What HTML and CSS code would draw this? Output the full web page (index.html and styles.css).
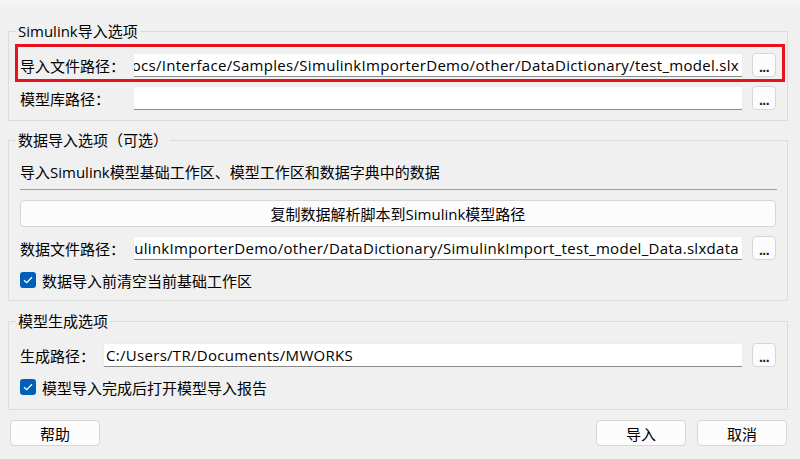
FILE: index.html
```html
<!DOCTYPE html>
<html lang="zh-CN">
<head>
  <meta charset="UTF-8" />
  <meta name="viewport" content="width=device-width, initial-scale=1.0" />
  <title>Simulink导入</title>
  <link rel="stylesheet" href="styles.css">
</head>
<body>
  <div class="top-strip"></div>

  <div class="dialog">
    <fieldset class="group group-first">
      <legend>Simulink导入选项</legend>
      <div class="row row-marked">
        <span class="label">导入文件路径：</span>
        <div class="field"><span>ocs/Interface/Samples/SimulinkImporterDemo/other/DataDictionary/test_model.slx</span></div>
        <button class="browse">...</button>
      </div>
      <div class="row">
        <span class="label">模型库路径：</span>
        <div class="field"></div>
        <button class="browse">...</button>
      </div>
    </fieldset>

    <fieldset class="group">
      <legend>数据导入选项（可选）</legend>
      <div class="desc">导入Simulink模型基础工作区、模型工作区和数据字典中的数据</div>
      <div class="sep"></div>
      <button class="wide-btn">复制数据解析脚本到Simulink模型路径</button>
      <div class="row">
        <span class="label">数据文件路径：</span>
        <div class="field"><span>ulinkImporterDemo/other/DataDictionary/SimulinkImport_test_model_Data.slxdata</span></div>
        <button class="browse">...</button>
      </div>
      <label class="check">
        <span class="box"><svg width="10" height="8" viewBox="0 0 10 8"><path d="M1 4.2 L3.7 6.7 L9 1.2" fill="none" stroke="#fff" stroke-width="1.3"/></svg></span>
        数据导入前清空当前基础工作区
      </label>
    </fieldset>

    <fieldset class="group group-last">
      <legend>模型生成选项</legend>
      <div class="row">
        <span class="label short">生成路径：</span>
        <div class="field left"><span>C:/Users/TR/Documents/MWORKS</span></div>
        <button class="browse">...</button>
      </div>
      <label class="check">
        <span class="box"><svg width="10" height="8" viewBox="0 0 10 8"><path d="M1 4.2 L3.7 6.7 L9 1.2" fill="none" stroke="#fff" stroke-width="1.3"/></svg></span>
        模型导入完成后打开模型导入报告
      </label>
    </fieldset>

    <div class="footer">
      <button class="btn">帮助</button>
      <div class="footer-right">
        <button class="btn">导入</button>
        <button class="btn">取消</button>
      </div>
    </div>
  </div>
</body>
</html>
```

FILE: styles.css
```css
body {
  margin: 0;
  background: #f0f0f0;
  color: #000;
  font-family: "Open Sans", "Noto Sans CJK SC", sans-serif;
  font-size: 15px;
  overflow: hidden;
}

.top-strip {
  height: 7px;
  background: #f4f4f4;
}

.dialog {
  padding: 14px 12px 0 8px;
}

.group {
  margin: 0;
  min-width: 0;
  border: 1px solid #dcdcdc;
  padding: 0 11px 10px 11px;
}

.group + .group {
  margin-top: 9px;
}

.group-last {
  margin-top: 10px !important;
  padding-bottom: 12px;
}

.group legend {
  padding: 0 2px;
  margin-left: -4px;
  line-height: 20px;
  height: 20px;
}

.row {
  display: flex;
  align-items: center;
  height: 24px;
  margin-top: 12px;
}

.row + .row {
  margin-top: 9px;
}

.row-marked {
  position: relative;
}

/* red annotation frame */
.row-marked::after {
  content: "";
  position: absolute;
  top: -9px;
  bottom: -5px;
  left: -5px;
  right: -9px;
  border: 3px solid #e5131d;
  pointer-events: none;
}

.label {
  width: 113px;
  flex: none;
  white-space: nowrap;
}

.label.short {
  width: 83px;
}

.field {
  flex: 1;
  min-width: 0;
  height: 24px;
  box-sizing: border-box;
  background: #fff;
  border: 1px solid #ececec;
  border-bottom-color: #8a8a8a;
  border-radius: 2px;
  display: flex;
  align-items: center;
  justify-content: flex-end;
  overflow: hidden;
  white-space: nowrap;
  padding: 0 3px 0 2px;
  letter-spacing: 0.3px;
}

.field.left {
  justify-content: flex-start;
}

.browse {
  flex: none;
  width: 24px;
  height: 24px;
  margin-left: 9px;
  padding: 4px 0 0;
  background: #fcfcfc;
  border: 1px solid #d6d6d6;
  border-radius: 4px;
  font-family: "Liberation Sans", sans-serif;
  font-size: 14px;
  font-weight: bold;
  line-height: 1;
  letter-spacing: -0.5px;
  color: #222;
}

.desc {
  margin-top: 12px;
  line-height: 20px;
}

.sep {
  margin-top: 7px;
  height: 1px;
  background: #a0a0a0;
  margin-right: -1px;
}

.wide-btn {
  display: block;
  width: 100%;
  height: 27px;
  margin-top: 10px;
  background: #fcfcfc;
  border: 1px solid #d6d6d6;
  border-radius: 4px;
  font-family: inherit;
  font-size: 15px;
  color: #000;
  padding: 0;
}

.wide-btn + .row {
  margin-top: 9px;
}

.check {
  display: flex;
  align-items: center;
  gap: 6px;
  height: 20px;
  margin-top: 10px;
}

.box {
  width: 16px;
  height: 16px;
  border-radius: 3px;
  background: #005fb8;
  display: flex;
  align-items: center;
  justify-content: center;
}

.footer {
  display: flex;
  justify-content: space-between;
  margin-top: 10px;
  padding: 0 1px 0 2px;
}

.footer-right {
  display: flex;
  gap: 11px;
}

.btn {
  width: 90px;
  height: 26px;
  background: #fcfcfc;
  border: 1px solid #d6d6d6;
  border-radius: 4px;
  font-family: inherit;
  font-size: 15px;
  color: #000;
  padding: 0;
}
```
